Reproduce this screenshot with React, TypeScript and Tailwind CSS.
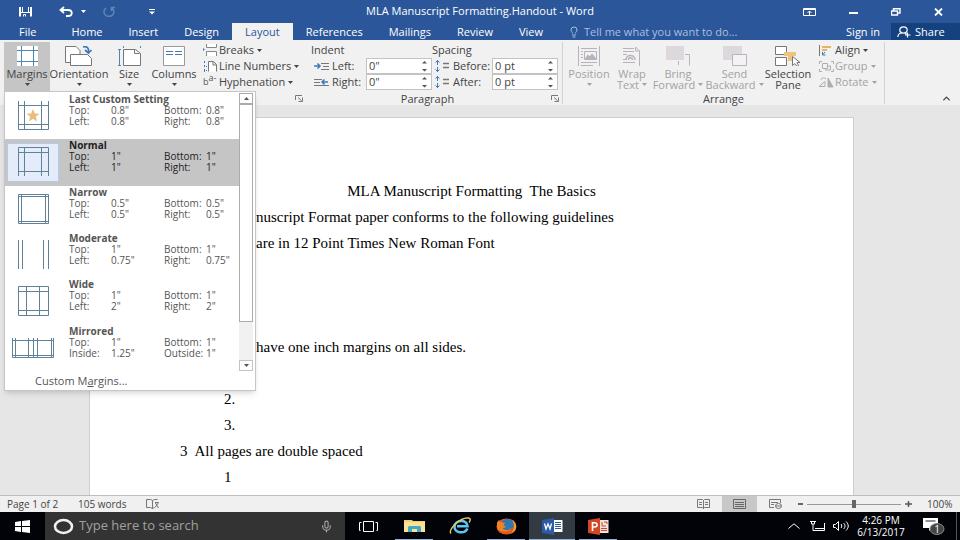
import type { ReactNode } from 'react';
import { ChevronUp, Lightbulb, Mic } from 'lucide-react';

const tabs = ['Home', 'Insert', 'Design', 'Layout', 'References', 'Mailings', 'Review', 'View'];

const presets = [
  { name: 'Last Custom Setting', kind: 'custom', rows: [['Top:', '0.8"', 'Bottom:', '0.8"'], ['Left:', '0.8"', 'Right:', '0.8"']] },
  { name: 'Normal', kind: 'normal', rows: [['Top:', '1"', 'Bottom:', '1"'], ['Left:', '1"', 'Right:', '1"']] },
  { name: 'Narrow', kind: 'narrow', rows: [['Top:', '0.5"', 'Bottom:', '0.5"'], ['Left:', '0.5"', 'Right:', '0.5"']] },
  { name: 'Moderate', kind: 'moderate', rows: [['Top:', '1"', 'Bottom:', '1"'], ['Left:', '0.75"', 'Right:', '0.75"']] },
  { name: 'Wide', kind: 'wide', rows: [['Top:', '1"', 'Bottom:', '1"'], ['Left:', '2"', 'Right:', '2"']] },
  { name: 'Mirrored', kind: 'mirrored', rows: [['Top:', '1"', 'Bottom:', '1"'], ['Inside:', '1.25"', 'Outside:', '1"']] },
];

const presetLines: Record<string, string> = {
  custom: 'M6.5 1V29.5H36.5V1M12.5 1V29M29.5 1V29M6 5.5H37M6 24.5H37',
  normal: 'M6.5 30V1.5H36.5V30M12.5 1V30M29.5 1V30M6 6.5H37M6 25.5H37',
  narrow: 'M6.5 1.5H36.5V30.5H6.5ZM9.5 1V31M33.5 1V31M6 3.5H37M6 28.5H37',
  moderate: 'M6.5 1V30M10.5 1V30M31.5 1V30M36.5 1V30',
  wide: 'M6.5 1.5H36.5V30.5H6.5ZM14.5 1V31M27.5 1V31M6 6.5H37M6 25.5H37',
  mirrored: 'M.5 6V25.5H41.5V6M3.5 6V25M16.5 6V25M21.5 6V25M25.5 6V25M39.5 6V25M0 8.5H42M0 23.5H42',
};

function PresetIcon({ kind }: { kind: string }) {
  return (
    <svg width="42" height="32" viewBox="0 0 42 32" fill="none">
      <path d={presetLines[kind]} stroke="#5f8199" />
      {kind === 'custom' && (
        <path d="M21 9l1.8 4.6 4.7.2-3.7 3 1.3 4.7-4.1-2.7-4.1 2.7 1.3-4.7-3.7-3 4.7-.2z" fill="#eabd7c" />
      )}
    </svg>
  );
}

function Caret({ className = '' }: { className?: string }) {
  return (
    <svg className={`inline-block shrink-0 ${className}`} width="5" height="3" viewBox="0 0 5 3" fill="currentColor">
      <path d="M0 0h5L2.500 3z" />
    </svg>
  );
}

function Launcher() {
  return (
    <svg width="8" height="7" viewBox="0 0 8 7" fill="none" stroke="#777">
      <path d="M.5 5V.5H7M3 2.500l3.500 3M7.500 2.500v4h-4" />
    </svg>
  );
}

type BigButtonProps = { icon: ReactNode; lines: string[]; className: string; caret?: 'below' | 'inline' };

function BigButton({ icon, lines, className, caret }: BigButtonProps) {
  return (
    <button className={`flex h-[49px] shrink-0 flex-col items-center whitespace-nowrap pt-1 leading-[11px] ${className}`}>
      <span className="mb-[2px] flex h-5 items-center">{icon}</span>
      <span>{lines[0]}</span>
      {caret === 'below' && <Caret className="mt-1" />}
      {lines[1] && (
        <span className="flex items-center gap-[3px]">
          {lines[1]}
          {caret === 'inline' && <Caret />}
        </span>
      )}
    </button>
  );
}

function SmallButton({ icon, label, className = '' }: { icon: ReactNode; label: string; className?: string }) {
  return (
    <button className={`flex h-4 items-center whitespace-nowrap leading-4 ${className}`}>
      <span className="flex w-4 shrink-0">{icon}</span>
      {label}
      <Caret className="ml-[3px]" />
    </button>
  );
}

function SpinBox({ id, value }: { id: string; value: string }) {
  return (
    <span className="flex h-4 w-[66px] items-center border border-[#c3c3c3] bg-white pr-1">
      <input id={id} defaultValue={value} className="w-full min-w-0 bg-transparent pl-0.5 leading-[14px] outline-none" />
      <svg className="shrink-0" width="5" height="12" viewBox="0 0 5 12" fill="#555">
        <path d="M0 3.500L2.500 1 5 3.500zM0 9h5L2.500 11.500z" />
      </svg>
    </span>
  );
}

function MarginsMenu() {
  return (
    <div className="absolute left-0 top-full z-10 w-[252px] border border-[#c6c6c6] bg-white pt-px text-[10px] leading-[11px] text-[#555] shadow-md">
      <div className="flex h-[278px]">
        <div className="flex flex-1 flex-col">
          {presets.map((preset) => (
            <button
              key={preset.name}
              className={`flex flex-1 items-center text-left ${preset.kind === 'normal' ? 'bg-[#c5c5c5] text-[#222]' : ''}`}
            >
              <span
                className={`ml-[2px] flex h-[39px] w-[52px] items-center justify-center ${
                  preset.kind === 'normal' ? 'border border-[#b5cbe8] bg-[#e3ecf8]' : ''
                }`}
              >
                <PresetIcon kind={preset.kind} />
              </span>
              <span className="ml-[10px] flex-1 self-start pt-px">
                <span className="block font-bold">{preset.name}</span>
                {preset.rows.map((row) => (
                  <span key={row[0]} className="grid grid-cols-[42px_53px_42px_1fr]">
                    {row.map((cell, i) => (
                      <span key={i}>{cell}</span>
                    ))}
                  </span>
                ))}
              </span>
            </button>
          ))}
        </div>
        <div className="mr-[2px] flex w-[14px] flex-col bg-[#f1f1f1]">
          <button aria-label="Scroll up" className="flex h-[11px] items-center justify-center border border-[#ababab] bg-white">
            <Caret className="rotate-180" />
          </button>
          <div className="h-[218px] border border-[#ababab] bg-white" />
          <div className="flex-1" />
          <button aria-label="Scroll down" className="flex h-[11px] items-center justify-center border border-[#c3c3c3] bg-white">
            <Caret />
          </button>
        </div>
      </div>
      <button className="block h-[19px] pl-[30px] text-[11px]">
        Custom M<u>a</u>rgins...
      </button>
    </div>
  );
}

function TitleBar() {
  return (
    <header className="relative flex h-[23px] shrink-0 items-center justify-between text-white">
      <div className="flex items-center pl-[19px]">
        <button aria-label="Save">
          <svg width="13" height="10" viewBox="0 0 13 10" fill="none" stroke="#fff">
            <path d="M1 0v9.500M12 0v9.500" strokeWidth="2" />
            <path d="M1 5.500h11M3.500 0v5M9.500 0v5M4.500 9.500v-2h2v2" />
          </svg>
        </button>
        <button aria-label="Undo" className="ml-[27px] flex items-center gap-2">
          <svg width="14" height="11" viewBox="0 0 14 11" fill="none" stroke="#fff" strokeWidth="1.800">
            <path d="M5 1L1.500 4 5 7M2 4h7c5 0 5 6 0 6H7" />
          </svg>
          <Caret />
        </button>
        <button aria-label="Repeat" className="ml-4">
          <svg width="14" height="12" viewBox="0 0 14 12" fill="none" stroke="#6283b8" strokeWidth="1.500">
            <path d="M9.500 2A5 4.500 0 1 1 4 2.200M9.500 5V1.500H13" />
          </svg>
        </button>
        <button aria-label="Customize Quick Access Toolbar" className="ml-[33px]">
          <svg width="6" height="6" viewBox="0 0 6 6" fill="#fff">
            <path d="M0 0h6v1H0zM0 2.500h6L3 5.500z" />
          </svg>
        </button>
      </div>
      <h1 className="absolute left-1/2 -translate-x-1/2 whitespace-nowrap text-[11px]">MLA Manuscript Formatting.Handout - Word</h1>
      <div className="flex items-center gap-[33px] pr-[17px]">
        <button aria-label="Ribbon Display Options">
          <svg width="13" height="8" viewBox="0 0 13 8" fill="none" stroke="#fff">
            <path d="M.5.5h12v7H.5zM0 1.500h13M6.500 7V3M4.500 5l2-2 2 2" />
          </svg>
        </button>
        <button aria-label="Minimize">
          <svg width="9" height="8" viewBox="0 0 9 8" fill="#fff">
            <path d="M0 4h9v2H0z" />
          </svg>
        </button>
        <button aria-label="Restore">
          <svg width="10" height="8" viewBox="0 0 10 8" fill="none" stroke="#fff">
            <path d="M.5 3h6v4h-6zM2.500 3V.7h6.500V5H7" strokeWidth="1.400" />
          </svg>
        </button>
        <button aria-label="Close">
          <svg width="9" height="8" viewBox="0 0 9 8" stroke="#fff" strokeWidth="1.800">
            <path d="M1 .5l7 7M8 .5l-7 7" />
          </svg>
        </button>
      </div>
    </header>
  );
}

function TabRow() {
  return (
    <nav className="flex h-[17px] shrink-0 items-stretch whitespace-nowrap leading-[17px] text-white">
      <button className="pl-[19px] pr-[22px]">File</button>
      {tabs.map((tab) => (
        <button key={tab} className={`px-[13px] ${tab === 'Layout' ? 'bg-[#f1f1f1] text-[#2b579a]' : ''}`}>
          {tab}
        </button>
      ))}
      <label className="ml-3 flex flex-1 items-center gap-1 text-[#a9bfe0]">
        <Lightbulb size={12} strokeWidth={2} className="shrink-0" />
        <input
          placeholder="Tell me what you want to do..."
          className="w-full min-w-0 bg-transparent outline-none placeholder:text-[#a9bfe0]"
        />
      </label>
      <button className="pr-[11px]">Sign in</button>
      <button className="flex w-[69px] items-center gap-1 bg-[#14427f] pl-[6px]">
        <svg width="14" height="12" viewBox="0 0 14 12" fill="none" stroke="#fff" strokeWidth="1.200">
          <ellipse cx="6.500" cy="4" rx="3.700" ry="3.200" />
          <path d="M.8 11c.3-2.500 2-4 4-4M8 7l1.500 1.200M10.500 6.500v5M8 9h5.500" />
        </svg>
        Share
      </button>
    </nav>
  );
}

function PageSetupGroup() {
  return (
    <section className="relative flex w-[301px] shrink-0">
      <div className="relative h-[49px]">
        <BigButton
          className="w-[46px] bg-[#c5c5c5]"
          lines={['Margins']}
          caret="below"
          icon={
            <svg width="21" height="20" viewBox="0 0 21 20" fill="#fff" stroke="#4f86ad">
              <path d="M.5 .5h20v19H.5z" stroke="#fff" />
              <path d="M4.500 0v20M16.500 0v20M0 4.500h21M0 15.500h21" />
            </svg>
          }
        />
        <MarginsMenu />
      </div>
      <BigButton
        className="w-[58px]"
        lines={['Orientation']}
        caret="below"
        icon={
          <svg width="28" height="20" viewBox="0 0 28 20" fill="#fff" stroke="#777">
            <path d="M.5.5H11l4 4v12H.5z" />
            <path d="M5.500 8.500h17l4 4v7h-21z" />
            <path d="M18 1c4-1 6 1 5.500 5M20 4l3.500 3L26.500 4" fill="none" stroke="#3d7ab8" strokeWidth="1.700" />
          </svg>
        }
      />
      <BigButton
        className="w-[42px]"
        lines={['Size']}
        caret="below"
        icon={
          <svg width="23" height="20" viewBox="0 0 23 20" fill="none" stroke="#777">
            <path d="M5.500 3.500h12l5 4v12h-17z" fill="#fff" />
            <path d="M16.500 3.500v4h5" />
            <path d="M1.500 3v17M0 3.500h3M0 19.500h3M5.500 0v2M22.500 0v2" stroke="#4f86ad" />
          </svg>
        }
      />
      <BigButton
        className="w-[48px]"
        lines={['Columns']}
        caret="below"
        icon={
          <svg width="22" height="20" viewBox="0 0 22 20" fill="none">
            <path d="M.5.5h21v19H.5z" fill="#fff" stroke="#999" />
            <path d="M3 5.500h7M12 5.500h7M3 8.500h7M12 8.500h7" stroke="#3d7ab8" />
          </svg>
        }
      />
      <div className="ml-[5px] flex flex-col">
        <SmallButton
          label="Breaks"
          icon={
            <svg width="14" height="12" viewBox="0 0 14 12" fill="#fff" stroke="#888">
              <path d="M3.500 0v3.500h10V0M3.500 12V7.500h10V12" />
              <path d="M0 4v3l2-1.500z" fill="#3d7ab8" stroke="none" />
            </svg>
          }
        />
        <SmallButton
          label="Line Numbers"
          icon={
            <svg width="14" height="11" viewBox="0 0 14 11" fill="#fff" stroke="#777">
              <path d="M5.500 10.500v-10h5l3 3v7M10 .5V4h3.500" />
              <path d="M1.500 0v2M1.500 4v2M1.500 8v3M3.500 5v1M3.500 9v1" stroke="#3d7ab8" />
            </svg>
          }
        />
        <SmallButton
          label="Hyphenation"
          icon={
            <span className="flex h-3 items-center text-[9px] leading-3 text-[#555]">
              b<sup className="text-[9px]">a-</sup>
            </span>
          }
        />
      </div>
      <span className="absolute bottom-[2px] right-[2px]">
        <Launcher />
      </span>
    </section>
  );
}

function IndentIcon({ flip }: { flip?: boolean }) {
  return (
    <svg width="15" height="9" viewBox="0 0 15 9" fill="none" stroke="#777">
      <path d={flip ? 'M0 1.500h8M0 4.500h6M0 7.500h15' : 'M7 1.500h8M9 4.500h6M7 7.500h8'} />
      <path d={flip ? 'M14 4H8M10.500 1.500L8 4l2.500 2.500' : 'M0 4h6M3.500 1.500L6 4 3.500 6.500'} stroke="#3d7ab8" strokeWidth="1.500" />
    </svg>
  );
}

function SpacingIcon() {
  return (
    <svg width="15" height="12" viewBox="0 0 15 12" fill="none" stroke="#3d7ab8">
      <path d="M2.500 0v5M.5 2.500l2-2 2 2M2.500 7v5M.5 9.500l2 2 2-2" />
      <path d="M8 3.500h6M8 7.500h6" stroke="#777" strokeWidth="1.500" />
    </svg>
  );
}

function ParagraphGroup() {
  return (
    <section className="relative flex w-[258px] shrink-0 border-r border-[#d2d2d2] pl-[6px]">
      <div className="w-[121px]">
        <div className="h-4 leading-4">Indent</div>
        <div className="flex h-4 items-center">
          <span className="w-[21px] pl-[3px]"><IndentIcon /></span>
          <label htmlFor="indent-left" className="w-[34px]">Left:</label>
          <SpinBox id="indent-left" value={'0"'} />
        </div>
        <div className="flex h-4 items-center">
          <span className="w-[21px] pl-[3px]"><IndentIcon flip /></span>
          <label htmlFor="indent-right" className="w-[34px]">Right:</label>
          <SpinBox id="indent-right" value={'0"'} />
        </div>
      </div>
      <div>
        <div className="h-4 leading-4">Spacing</div>
        <div className="flex h-4 items-center">
          <span className="w-[21px] pl-[3px]"><SpacingIcon /></span>
          <label htmlFor="spacing-before" className="w-[39px]">Before:</label>
          <SpinBox id="spacing-before" value="0 pt" />
        </div>
        <div className="flex h-4 items-center">
          <span className="w-[21px] pl-[3px]"><SpacingIcon /></span>
          <label htmlFor="spacing-after" className="w-[39px]">After:</label>
          <SpinBox id="spacing-after" value="0 pt" />
        </div>
      </div>
      <span className="absolute inset-x-0 bottom-0 mr-3 text-center leading-[11px]">Paragraph</span>
      <span className="absolute bottom-[2px] right-[3px]">
        <Launcher />
      </span>
    </section>
  );
}

function ArrangeGroup() {
  return (
    <section className="flex w-[322px] shrink-0 flex-col justify-between border-r border-[#d2d2d2]">
      <div className="flex">
        <BigButton
          className="w-[52px] text-[#a3a3a3]"
          lines={['Position']}
          caret="below"
          icon={
            <svg width="22" height="20" viewBox="0 0 22 20" fill="none" stroke="#b8b3ba">
              <path d="M.5 0v20M21.500 0v20M3 2.500h16M3 16.500h16M3 19.500h12M3 5.500h2M3 8.500h2M3 11.500h2" />
              <path d="M6.500 5.500h12v8h-12z" />
              <path d="M7 13l3-4 2 2 2-3 4 5z" fill="#b8b3ba" />
            </svg>
          }
        />
        <BigButton
          className="w-[34px] text-[#a3a3a3]"
          lines={['Wrap', 'Text']}
          caret="inline"
          icon={
            <svg width="18" height="20" viewBox="0 0 18 20" fill="none" stroke="#b8b3ba">
              <path d="M0 2.500h11M0 5.500h11M0 8.500h4M0 16.500h12M0 13.500h3M12.500 1v4h4v15M12.500 1l4 4" />
              <path d="M3 14c0-6 9-6 9 0M5.500 14c0-3 4-3 4 0" strokeWidth="1.500" />
            </svg>
          }
        />
        <BigButton
          className="w-[58px] text-[#a3a3a3]"
          lines={['Bring', 'Forward']}
          caret="inline"
          icon={
            <svg width="24" height="20" viewBox="0 0 24 20" fill="none" stroke="#c9c4ca">
              <path d="M0 0h18v14H0z" fill="#dcd8dc" stroke="none" />
              <path d="M19 8.500h4.500v11M12.500 15v4" stroke="#b8b3ba" />
            </svg>
          }
        />
        <BigButton
          className="w-[55px] text-[#a3a3a3]"
          lines={['Send', 'Backward']}
          caret="inline"
          icon={
            <svg width="24" height="20" viewBox="0 0 24 20">
              <path d="M0 0h19v14H0z" fill="#dcd8dc" />
              <path d="M9.500 8.500h14v11h-14z" fill="#f4f2f4" stroke="#b8b3ba" />
            </svg>
          }
        />
        <BigButton
          className="w-[52px]"
          lines={['Selection', 'Pane']}
          icon={
            <svg width="26" height="20" viewBox="0 0 26 20" fill="#fff" stroke="#777">
              <path d="M.5.5h11v8H.5zM.5 11.500h11v8H.5z" />
              <path d="M9 6h12v4h-4v5h-4v-5H9z" fill="#edc580" stroke="none" />
              <path d="M17.500 10.500v9l2.500-2 2 3 1.500-1-1.500-3h3z" />
            </svg>
          }
        />
        <div className="ml-[5px] flex flex-col">
          <SmallButton
            label="Align"
            icon={
              <svg width="12" height="11" viewBox="0 0 12 11">
                <path d="M.5 0v11" stroke="#777" />
                <path d="M3 1h9v2H3zM3 4h5v2H3z" fill="#e7b562" />
                <path d="M3.500 7v3h3M6 7L4 9.500" fill="none" stroke="#3d7ab8" />
              </svg>
            }
          />
          <SmallButton
            className="text-[#a3a3a3]"
            label="Group"
            icon={
              <svg width="15" height="11" viewBox="0 0 15 11" fill="none" stroke="#b0acb2">
                <path d="M.5 3V.5H3M12 .5h2.500V3M.5 8v2.500H3M12 10.500h2.500V8M3.500 2.500h5v5h-5zM8.500 5h3v4h-5V8" />
              </svg>
            }
          />
          <SmallButton
            className="text-[#a3a3a3]"
            label="Rotate"
            icon={
              <svg width="15" height="11" viewBox="0 0 15 11" fill="none" stroke="#b0acb2">
                <path d="M6 4.500v5H0zM2 3c0-2 3-3 5-1" />
                <path d="M9 1v9h5z" fill="#b0acb2" />
              </svg>
            }
          />
        </div>
      </div>
      <span className="text-center leading-[11px]">Arrange</span>
    </section>
  );
}

function WordDocument() {
  return (
    <main className="min-h-0 flex-1 overflow-hidden bg-[#e6e6e6] pl-[89px] pr-[106px] pt-3">
      <article className="h-full border-x border-t border-[#cfcfcf] bg-white pt-[60px] font-['Liberation_Serif',serif] text-[15px] leading-[26px] text-black">
        <h2 className="whitespace-pre text-center">MLA Manuscript Formatting  The Basics</h2>
        <div className="whitespace-nowrap pl-[90px]">
          <p className="pl-[76px]">nuscript Format paper conforms to the following guidelines</p>
          <p className="pl-[76px]">are in 12 Point Times New Roman Font</p>
          <p className="pl-[76px] pt-[78px]">have one inch margins on all sides.</p>
          <p className="pl-[44px] pt-[26px]">2.</p>
          <p className="pl-[44px]">3.</p>
          <p className="flex gap-[7px]">
            <span>3</span>All pages are double spaced
          </p>
          <p className="pl-[44px]">1</p>
        </div>
      </article>
    </main>
  );
}

function StatusBar() {
  return (
    <footer className="flex h-[17px] shrink-0 items-center whitespace-nowrap border-t border-[#bdbdbd] bg-[#f0f0f0] text-[10px] leading-4 text-[#444]">
      <span className="ml-[7px] w-[71px]">Page 1 of 2</span>
      <span className="w-[68px]">105 words</span>
      <svg width="14" height="10" viewBox="0 0 14 10" fill="none" stroke="#777">
        <path d="M6.500 1.500v8L4.500 8.500h-4v-8h4zM6.500 1.500l2-1h3M6.500 9.500l2-1M9 3.500h3.500l-3.500 5M9.500 4l3 5" />
      </svg>
      <div className="flex-1" />
      <button aria-label="Read Mode" className="mr-3">
        <svg width="13" height="10" viewBox="0 0 13 10" fill="none" stroke="#777">
          <path d="M6.500 1v9M.5.5h5l1 1 1-1h5v8h-5l-1 1-1-1h-5zM2 3.500h3M2 5.500h3M8 3.500h3M8 5.500h3" />
        </svg>
      </button>
      <button aria-label="Print Layout" className="mr-3 flex h-4 w-[35px] items-center justify-center bg-[#c8c8c8]">
        <svg width="13" height="10" viewBox="0 0 13 10" fill="none" stroke="#666">
          <path d="M.5.5h12v9H.5zM2 3.500h9M2 5.500h9M2 7.500h9" />
        </svg>
      </button>
      <button aria-label="Web Layout" className="mr-4">
        <svg width="13" height="10" viewBox="0 0 13 10" fill="none" stroke="#777">
          <path d="M5 8.500H.5v-8h11V4M2 3.500h7M2 5.500h3" />
          <ellipse cx="9.500" cy="7" rx="3" ry="2.500" />
          <path d="M7 7h5" />
        </svg>
      </button>
      <button aria-label="Zoom out" className="h-[2px] w-[5px] bg-[#666]" />
      <input
        type="range"
        aria-label="Zoom"
        defaultValue={50}
        className="mx-1 h-2 w-[94px] appearance-none bg-[linear-gradient(#999,#999)] bg-[length:100%_1px] bg-center bg-no-repeat [&::-webkit-slider-thumb]:h-2 [&::-webkit-slider-thumb]:w-1 [&::-webkit-slider-thumb]:appearance-none [&::-webkit-slider-thumb]:bg-[#666]"
      />
      <button aria-label="Zoom in">
        <svg width="7" height="6" viewBox="0 0 7 6" stroke="#555" strokeWidth="1.500">
          <path d="M0 3h7M3.500 0v6" />
        </svg>
      </button>
      <span className="ml-[15px] w-[33px]">100%</span>
    </footer>
  );
}

type TaskButtonProps = { label: string; running?: boolean; active?: boolean; children: ReactNode };

function TaskButton({ label, running, active, children }: TaskButtonProps) {
  return (
    <button aria-label={label} className={`relative flex h-full w-[46px] items-center justify-center ${active ? 'bg-[#343a41]' : ''}`}>
      {children}
      {running && <span className={`absolute bottom-0 h-px bg-[#8fb3dc] ${active ? 'inset-x-0' : 'inset-x-1'}`} />}
    </button>
  );
}

function Taskbar() {
  return (
    <div className="flex h-7 shrink-0 items-center bg-[#020308] text-white">
      <button aria-label="Start" className="flex h-full w-[45px] items-center justify-center">
        <svg width="15" height="13" viewBox="0 0 15 13" fill="#fff">
          <path d="M0 2l6-.9V6H0zM7 1l8-1v6H7zM0 7h6v4.900L0 11zM7 7h8v6l-8-1z" />
        </svg>
      </button>
      <label className="flex h-full w-[300px] items-center bg-[#333] pl-2 pr-3">
        <svg className="shrink-0" width="21" height="17" viewBox="0 0 21 17" fill="none" stroke="#f2f2f2" strokeWidth="2.500">
          <ellipse cx="10.500" cy="8.500" rx="8.500" ry="6.500" />
        </svg>
        <input
          placeholder="Type here to search"
          className="ml-[5px] w-full min-w-0 bg-transparent text-[13px] outline-none placeholder:text-[#a0a0a0]"
        />
        <Mic size={13} strokeWidth={2} className="shrink-0 text-[#a8a8a8]" />
      </label>
      <TaskButton label="Task View">
        <svg width="19" height="11" viewBox="0 0 19 11" fill="none" stroke="#fff">
          <path d="M4.500.5h10v10h-10zM2.500 1.500h-2v8h1M16.500 1.500h2v8h-1" />
        </svg>
      </TaskButton>
      <TaskButton label="File Explorer" running>
        <svg width="21" height="12" viewBox="0 0 21 12">
          <path d="M0 0h8l1 1h12v11H0z" fill="#f0cf6c" />
          <path d="M0 2h21v10H0z" fill="#fbe294" />
          <path d="M4 12V7l1-1h11l1 1v5h-4V9H8v3z" fill="#43a8c5" />
        </svg>
      </TaskButton>
      <TaskButton label="Internet Explorer">
        <svg width="23" height="18" viewBox="0 0 23 18" fill="none">
          <path d="M18.500 11.500C15.500 17.500 5 16 5.500 9.300S18.500 2 18.500 9.300H8" stroke="#5cc6ee" strokeWidth="2.600" />
          <path d="M2 16.500C-1 13 11 0 19.500 1c3 .5 1.500 3 .5 4.500" stroke="#e8c95b" strokeWidth="1.400" />
        </svg>
      </TaskButton>
      <TaskButton label="Firefox" running>
        <svg width="21" height="17" viewBox="0 0 21 17">
          <ellipse cx="10.500" cy="8.500" rx="10" ry="8" fill="#e2591c" />
          <ellipse cx="11.500" cy="6.500" rx="6.500" ry="5.500" fill="#2f78b4" />
          <path d="M1 4.500c1-1 1.500-2 2-2.500l1.500 2L9 5 7.500 7.500 10 8.500c-1 1.500-2 1.500-3.500 1.500 2 3 6 3 9 0 0 4-13 6-14.500-1z" fill="#ee8322" />
          <path d="M16 1.500c6 4 5 11.500-1 14 3.500-4 4-9 1-14z" fill="#f5a02c" />
        </svg>
      </TaskButton>
      <TaskButton label="Word" running active>
        <svg width="21" height="17" viewBox="0 0 21 17">
          <path d="M11 2h9.500v12H11z" fill="#fff" />
          <path d="M13 4.500h6M13 6.500h6M13 8.500h6M13 10.500h6" stroke="#2b579a" />
          <path d="M0 2l12-2v17L0 15z" fill="#2b5ba8" />
          <path d="M2.500 5.500L4 11l2-5 2 5 1.500-5.500" fill="none" stroke="#fff" strokeWidth="1.300" />
        </svg>
      </TaskButton>
      <TaskButton label="PowerPoint" running>
        <svg width="21" height="17" viewBox="0 0 21 17">
          <path d="M11 2h9.500v13H11z" fill="#f3e4df" />
          <path d="M13 10.500h6M13 12.500h6M14 4v4h4M16 4h3v2" stroke="#d24726" fill="none" />
          <path d="M0 2l12-2v17L0 15z" fill="#d24726" />
          <path d="M4.500 13V4.700h2c3.500 0 3.500 4.300 0 4.300h-2" fill="none" stroke="#fff" strokeWidth="1.600" />
        </svg>
      </TaskButton>
      <div className="flex-1" />
      <button aria-label="Show hidden icons">
        <svg width="12" height="6" viewBox="0 0 12 6" fill="none" stroke="#fff">
          <path d="M.5 5.500L6 .8l5.500 4.700" />
        </svg>
      </button>
      <svg className="ml-[10px]" width="15" height="10" viewBox="0 0 15 10" fill="none" stroke="#fff">
        <path d="M1.500 0v3h3V0M0 .5h6M3 3v6.500h11.500V2M5 7.500h9" />
      </svg>
      <svg className="ml-2" width="16" height="10" viewBox="0 0 16 10" fill="none" stroke="#fff">
        <path d="M.5 3.500h2l3-3v9l-3-3h-2zM8 3c1 1 1 3 0 4M10.500 2c2 2 2 4 0 6M13 .5c3 3 3 6 0 9" />
      </svg>
      <time className="ml-[6px] w-[52px] text-center text-[10px] leading-3">
        4:26 PM
        <br />
        6/13/2017
      </time>
      <button aria-label="Notifications" className="ml-[14px] mr-[11px]">
        <svg width="24" height="18" viewBox="0 0 24 18">
          <path d="M2 1h15v10h-6l-3 3v-3H2z" fill="#fff" />
          <path d="M4.500 4h10" stroke="#222" />
          <ellipse cx="16" cy="12" rx="7" ry="5.500" fill="#444" stroke="#888" />
          <text x="16" y="16" fontSize="10" fill="#fff" textAnchor="middle">1</text>
        </svg>
      </button>
      <div className="mr-[3px] h-full border-l border-[#555]" />
    </div>
  );
}

export default function App() {
  return (
    <div className="flex h-screen flex-col overflow-hidden bg-[#2b579a] font-['Open_Sans',sans-serif] text-[11px] text-[#444]">
      <TitleBar />
      <TabRow />
      <div className="relative z-10 flex h-[65px] shrink-0 bg-[#f1f1f1] pb-px pl-1 pt-[2px]">
        <PageSetupGroup />
        <ParagraphGroup />
        <ArrangeGroup />
        <button aria-label="Collapse the Ribbon" className="ml-auto mr-2 self-end">
          <ChevronUp size={11} strokeWidth={3} />
        </button>
      </div>
      <WordDocument />
      <StatusBar />
      <Taskbar />
    </div>
  );
}
